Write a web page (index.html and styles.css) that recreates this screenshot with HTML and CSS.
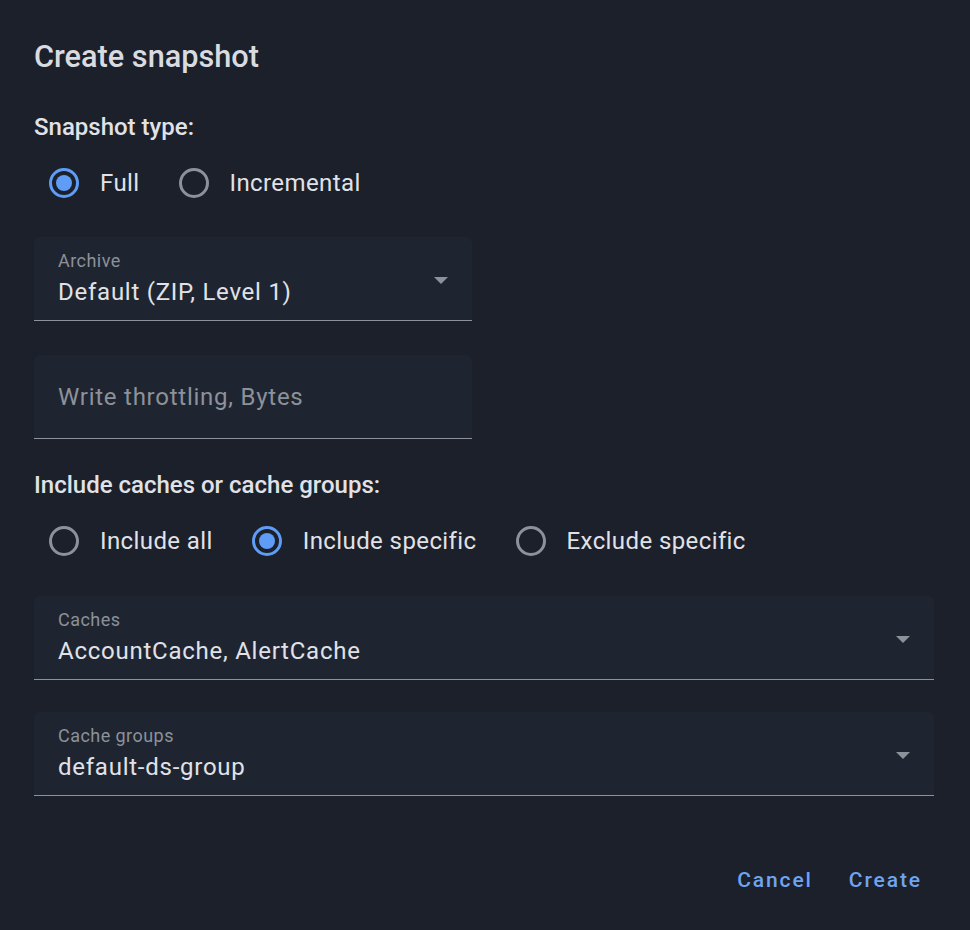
FILE: index.html
```html
<!DOCTYPE html>
<html>
<head>
<meta charset="utf-8">
<link rel="stylesheet" href="styles.css">
</head>
<body>
<div class="dialog">
  <h1 class="title">Create snapshot</h1>
  <div class="section-label first">Snapshot type:</div>
  <div class="radio-group">
    <label class="radio checked"><span class="circle"></span><span class="rlabel">Full</span></label>
    <label class="radio"><span class="circle"></span><span class="rlabel">Incremental</span></label>
  </div>
  <div class="field narrow select">
    <div class="flabel">Archive</div>
    <div class="fvalue">Default (ZIP, Level 1)</div>
    <span class="arrow"></span>
  </div>
  <div class="field narrow input">
    <div class="placeholder">Write throttling, Bytes</div>
  </div>
  <div class="section-label second">Include caches or cache groups:</div>
  <div class="radio-group">
    <label class="radio"><span class="circle"></span><span class="rlabel">Include all</span></label>
    <label class="radio checked"><span class="circle"></span><span class="rlabel">Include specific</span></label>
    <label class="radio"><span class="circle"></span><span class="rlabel">Exclude specific</span></label>
  </div>
  <div class="field wide select">
    <div class="flabel">Caches</div>
    <div class="fvalue">AccountCache, AlertCache</div>
    <span class="arrow"></span>
  </div>
  <div class="field wide select groups">
    <div class="flabel">Cache groups</div>
    <div class="fvalue">default-ds-group</div>
    <span class="arrow"></span>
  </div>
  <div class="actions">
    <button class="btn">Cancel</button>
    <button class="btn">Create</button>
  </div>
</div>
</body>
</html>
```

FILE: styles.css
```css
html, body {
  margin: 0;
  padding: 0;
  background: #1b202a;
  font-family: Roboto, "Liberation Sans", sans-serif;
  color: #e1e2e8;
}
.dialog {
  width: 970px;
  height: 930px;
  box-sizing: border-box;
  padding: 33px 36px 0 34px;
  display: flex;
  flex-direction: column;
}
.title {
  margin: 0;
  font-size: 30.7px;
  line-height: 48px;
  font-weight: 500;
  color: #d8dbe0;
}
.section-label {
  font-size: 24px;
  line-height: 36px;
  font-weight: 500;
  color: #e1e2e8;
}
.section-label.first {
  margin-top: 28px;
}
.section-label.second {
  margin-top: 28px;
}
.radio-group {
  display: flex;
  margin-top: 8px;
  height: 60px;
  align-items: center;
}
.radio {
  display: flex;
  align-items: center;
  margin-right: 24px;
}
.circle {
  width: 60px;
  height: 60px;
  display: flex;
  align-items: center;
  justify-content: center;
  position: relative;
}
.circle::before {
  content: "";
  width: 30px;
  height: 30px;
  box-sizing: border-box;
  border: 3px solid #8d9199;
  border-radius: 50%;
}
.radio.checked .circle::before {
  border-color: #5e9cf6;
}
.radio.checked .circle::after {
  content: "";
  position: absolute;
  left: 22px;
  top: 22px;
  width: 16px;
  height: 16px;
  border-radius: 50%;
  background: #5e9cf6;
}
.rlabel {
  font-size: 24px;
  letter-spacing: 0.4px;
  padding-left: 6px;
  color: #e1e2e8;
}
.field {
  position: relative;
  height: 84px;
  box-sizing: border-box;
  background: #1e2531;
  border-radius: 6px 6px 0 0;
  border-bottom: 1.5px solid #8d9199;
  padding: 0 24px;
  margin-top: 34px;
}
.field.narrow { width: 438px; }
.field.wide { width: 900px; }
.radio-group + .field { margin-top: 24px; }
.radio-group + .field.wide { margin-top: 25px; }
.field.groups { margin-top: 32px; }
.flabel {
  font-size: 18px;
  line-height: 24px;
  padding-top: 12px;
  color: #8d9199;
  letter-spacing: 0.45px;
}
.fvalue {
  font-size: 24px;
  line-height: 36px;
  padding-top: 1px;
  color: #e1e2e8;
  letter-spacing: 0.75px;
}
.placeholder {
  font-size: 24px;
  line-height: 84px;
  color: #8d9199;
  letter-spacing: 0.75px;
}
.arrow {
  position: absolute;
  right: 24px;
  top: 40px;
  width: 0;
  height: 0;
  border-left: 7.5px solid transparent;
  border-right: 7.5px solid transparent;
  border-top: 7.5px solid #8d9199;
}
.actions {
  display: flex;
  justify-content: flex-end;
  margin-top: 57px;
}
.btn {
  background: none;
  border: none;
  font-family: Roboto, "Liberation Sans", sans-serif;
  font-size: 21px;
  font-weight: 500;
  letter-spacing: 1.9px;
  color: #6fa4f1;
  padding: 0 12px 0 18px;
  height: 54px;
}
.btn + .btn {
  padding-left: 24px;
}
```
